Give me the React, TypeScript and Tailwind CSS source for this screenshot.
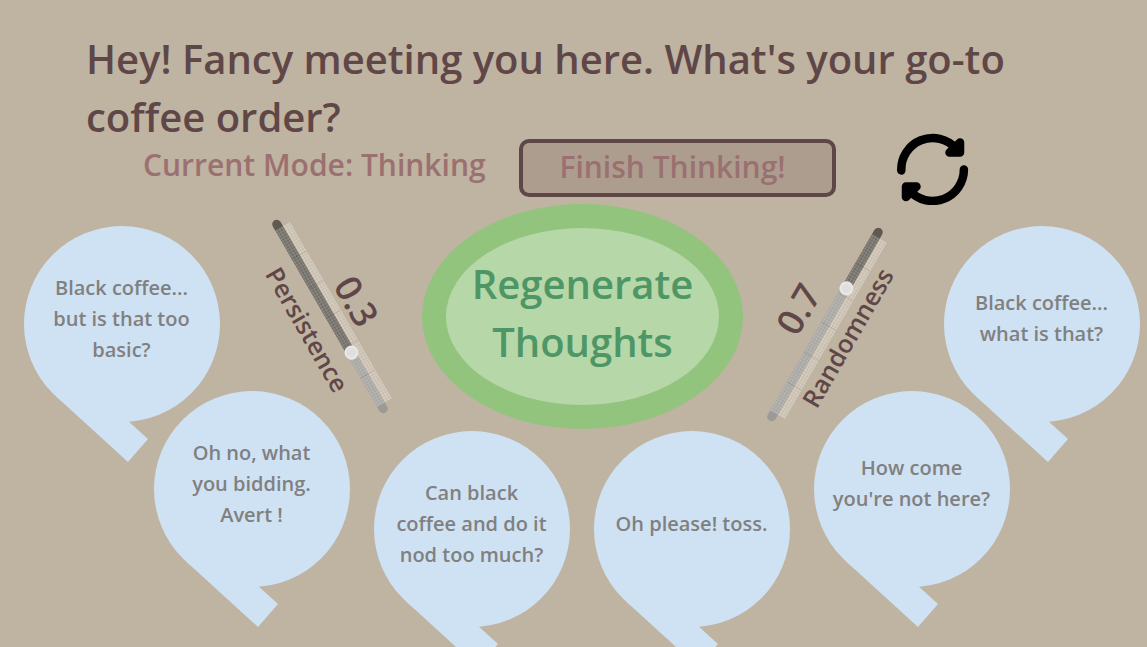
import { useState } from "react";

type Thought = { lines: string; place: string };

const thoughts: Thought[] = [
  { lines: "Black coffee...\nbut is that too\nbasic?", place: "" },
  { lines: "Oh no, what\nyou bidding.\nAvert !", place: "mt-[165px] -ml-[66px]" },
  { lines: "Can black\ncoffee and do it\nnod too much?", place: "mt-[205px] ml-6" },
  { lines: "Oh please! toss.", place: "mt-[205px] ml-6" },
  { lines: "How come\nyou're not here?", place: "mt-[165px] ml-6" },
  { lines: "Black coffee...\nwhat is that?", place: "-ml-[66px]" },
];

function Bubble({ lines, place }: Thought) {
  return (
    <li className={`grid h-[236px] w-[196px] shrink-0 ${place}`}>
      <svg viewBox="0 0 196 236" className="col-start-1 row-start-1 h-[236px] w-[196px] fill-[#cfe2f3]" aria-hidden="true">
        <circle cx="98" cy="98" r="98" />
        <path d="M98 98 L31.900 170.300 L104 236 L124 213 L105 195.700 Z" />
      </svg>
      <p className="col-start-1 row-start-1 flex h-[184px] items-center justify-center whitespace-pre-line text-center text-[20px] leading-[31px] text-[#808080]">
        {lines}
      </p>
    </li>
  );
}

const segments = [1, 2, 3, 4, 5, 6];

function Ticks({ className }: { className: string }) {
  return (
    <div className={`flex ${className}`} aria-hidden="true">
      {segments.map((n) => (
        <span key={n} className="flex-1 border-r border-black/10 last:border-r-0" />
      ))}
    </div>
  );
}

function Dial({ label, turn, flip, start }: { label: string; turn: string; flip: string; start: number }) {
  const [value, setValue] = useState(start);
  const id = label.toLowerCase();
  const stop = `${4 + value * 92}%`;
  return (
    <div className={`flex w-[222px] shrink-0 flex-col items-center pb-2.5 text-[#5f4747] ${turn}`}>
      <output htmlFor={id} className="h-[37px] text-[36px] leading-[37px]">
        {value.toFixed(1)}
      </output>
      <div className={`w-full py-2 ${flip}`}>
        <div className="grid h-[9px]">
          <div
            className="col-start-1 row-start-1 h-[9px] rounded-full"
            style={{ backgroundImage: `linear-gradient(to right, #9c9a95 ${stop}, #5e5a52 ${stop})` }}
          />
          <Ticks className="col-start-1 row-start-1 mx-[9px] h-[9px] bg-[radial-gradient(#ffffff50_35%,#ffffff12_75%)] bg-size-[3px_3px]" />
          <input
            id={id}
            type="range"
            min={0}
            max={1}
            step={0.1}
            value={value}
            onChange={(e) => setValue(Number(e.target.value))}
            className="col-start-1 row-start-1 m-0 h-[9px] w-full appearance-none bg-transparent [&::-webkit-slider-thumb]:size-[14px] [&::-webkit-slider-thumb]:appearance-none [&::-webkit-slider-thumb]:rounded-full [&::-webkit-slider-thumb]:bg-[radial-gradient(#e0dfde_35%,#e9e8e7_60%)]"
          />
        </div>
        <Ticks className="mx-[9px] -mb-2 h-2 bg-[radial-gradient(#d9d1c5_35%,#bfb3a2_85%)] bg-size-[3px_3px]" />
      </div>
      <label htmlFor={id} className="h-[27px] text-[25px] leading-[27px]">
        {label}
      </label>
    </div>
  );
}

export default function App() {
  const [thinking, setThinking] = useState(true);
  return (
    <main className="h-screen overflow-hidden bg-[#bfb3a2] font-['Open_Sans',sans-serif] font-semibold">
      <div className="mx-auto max-w-[1147px]">
        <h1 className="pt-[30px] pr-[100px] pl-[86px] text-[40px] leading-[58px] text-[#5f4747]">
          Hey! Fancy meeting you here. What's your go-to coffee order?
        </h1>
        <div className="-mt-[15px] flex items-center pl-[143px] text-[30px] text-[#9b7070]">
          <p className="w-[376px] pb-2 whitespace-nowrap">Current Mode: {thinking ? "Thinking" : "Talking"}</p>
          <button
            type="button"
            onClick={() => setThinking(!thinking)}
            className="h-[58px] w-[317px] rounded-[10px] border-4 border-[#5f4747] bg-[#ad9d8f] pr-2.5 pb-1"
          >
            {thinking ? "Finish Thinking!" : "Start Thinking!"}
          </button>
          <button type="button" aria-label="Refresh" className="ml-[61px] h-[74px] w-[72px]">
            <svg viewBox="0 -3 72 74" className="size-full" fill="none" stroke="#000" strokeWidth="8.500" strokeLinecap="round" aria-hidden="true">
              <path d="M4.300 36.500 A31.300 31.300 0 0 1 59 14.600" />
              <path d="M66.900 35.500 A31.300 31.300 0 0 1 12.200 56.400" />
              <path d="M63 8.500 V18.500 H52.500 Z" fill="#000" strokeLinejoin="round" />
              <path d="M9 63 V52.500 H19.500 Z" fill="#000" strokeLinejoin="round" />
            </svg>
          </button>
        </div>
      </div>
      <div className="-mt-px grid">
        <ul className="col-start-1 row-start-1 flex justify-center pt-[22px] pl-4">
          {thoughts.map((t, i) => (
            <Bubble key={i} {...t} />
          ))}
        </ul>
        <div className="col-start-1 row-start-1 flex h-[225px] items-center justify-center pl-[18px]">
          <div className="flex w-[184px] shrink-0 justify-center">
            <Dial label="Persistence" turn="rotate-60" flip="rotate-180" start={0.3} />
          </div>
          <button
            type="button"
            className="h-[225px] w-[321px] shrink-0 rounded-[50%] border-24 border-[#93c47d] bg-[#b6d7a8] pb-2 text-[40px] leading-[58px] text-[#4e9666]"
          >
            Regenerate
            <br />
            Thoughts
          </button>
          <div className="mr-5 flex w-[164px] shrink-0 justify-center pt-4">
            <Dial label="Randomness" turn="-rotate-60" flip="" start={0.7} />
          </div>
        </div>
      </div>
    </main>
  );
}
